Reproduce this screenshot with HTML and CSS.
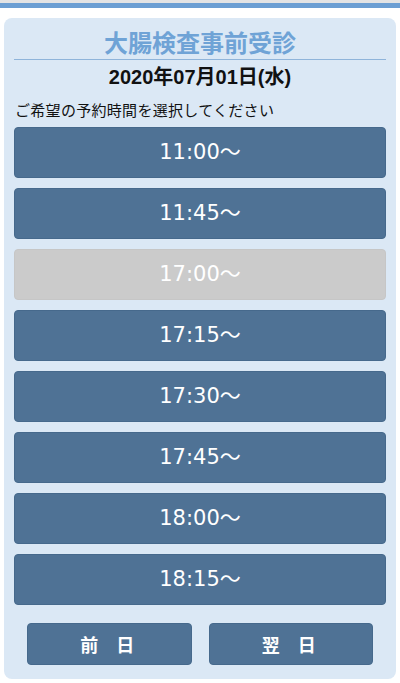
FILE: index.html
```html
<!DOCTYPE html>
<html lang="ja">
   <head>
      <title>大腸検査事前受診</title>
      <meta charset="UTF-8">
      <meta name="viewport" content="width=device-width, initial-scale=1.0">
      <link rel="stylesheet" href="styles.css">
   </head>
   <body>
      <header class="topbar"></header>
      <main class="card">
         <h1 class="title">大腸検査事前受診</h1>
         <h2 class="date">2020年07月01日(水)</h2>
         <p class="lead">ご希望の予約時間を選択してください</p>
         <div class="slots">
            <button class="slot">11:00〜</button>
            <button class="slot">11:45〜</button>
            <button class="slot full" disabled>17:00〜</button>
            <button class="slot">17:15〜</button>
            <button class="slot">17:30〜</button>
            <button class="slot">17:45〜</button>
            <button class="slot">18:00〜</button>
            <button class="slot">18:15〜</button>
         </div>
         <nav class="days">
            <button class="day">前　日</button>
            <button class="day">翌　日</button>
         </nav>
      </main>
   </body>
</html>
```

FILE: styles.css
```css
*
{ box-sizing:border-box;}
html
{ background-color:#fff; }
body
{ margin:0;
  font-family:"Noto Sans CJK JP", "Noto Sans", sans-serif;
  color:#111;}
.topbar
{ height:8px;
  border-top:3px solid #e4e4e4;
  background-color:#6c9fd3;}
.card
{ margin:10px 4px 0;
  padding:0 10px 14px;
  border-radius:8px;
  background-color:#dbe8f5;}
.title
{ margin:0;
  padding:7px 0 1px;
  font-size:24px;
  line-height:33px;
  text-align:center;
  color:#6fa3d6;
  border-bottom:1px solid #8fb4da;}
.date
{ margin:4px 0 0;
  font-family:"Liberation Sans", "Noto Sans CJK JP", sans-serif;
  font-size:20px;
  line-height:27px;
  text-align:center;}
.lead
{ margin:8px 0 0 1px;
  font-size:15px;
  letter-spacing:.3px;
  line-height:21px;}
.slots
{ margin-top:7px;
  display:flex;
  flex-direction:column;
  gap:10px;}
.slot, .day
{ font-family:inherit;
  color:#fff;
  border:1px solid #46698c;
  background-color:#4f7295;
  border-radius:4px;}
.slot
{ height:51px;
  font-family:"DejaVu Sans", "Noto Sans CJK JP", sans-serif;
  font-size:21px;
  padding:0 0 5px;}
.slot.full
{ background-color:#cbcbcb;
  border-color:#c6c6c6;}
.days
{ display:flex;
  gap:17px;
  margin-top:18px;
  padding:0 13px;}
.day
{ flex:1;
  height:42px;
  font-size:18px;
  font-weight:bold;
  padding:0 4px 0 0;}
```
